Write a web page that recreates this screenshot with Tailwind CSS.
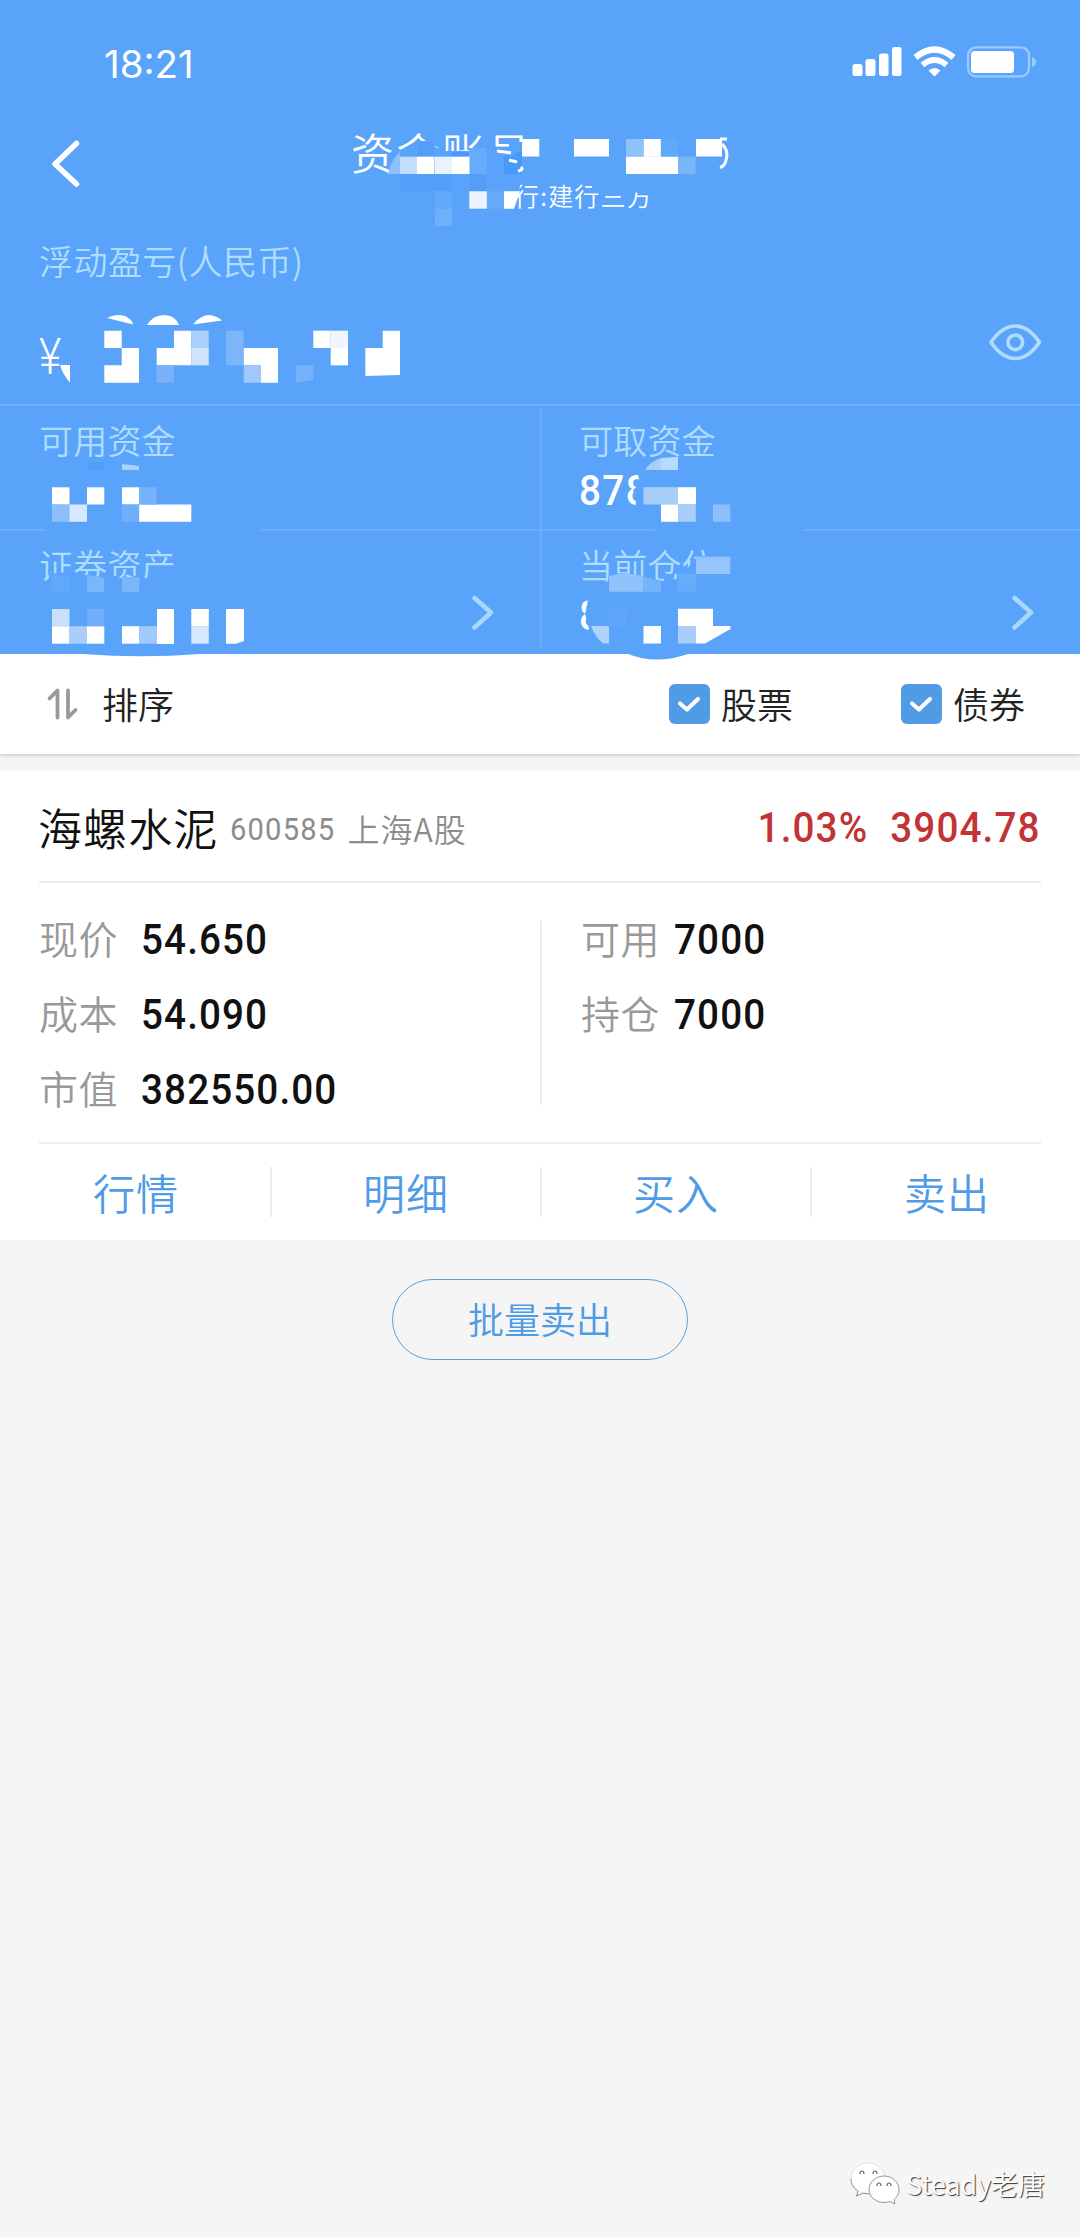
<!DOCTYPE html>
<html lang="zh-CN">
<head>
<meta charset="utf-8">
<title>资金账号</title>
<script src="https://cdn.jsdelivr.net/npm/@tailwindcss/browser@4"></script>
</head>
<body class="w-[1080px] min-h-[2237px] bg-[#f5f5f5] font-['Noto_Sans_CJK_SC',sans-serif] font-[350] leading-none antialiased">
<div class="flex flex-col min-h-[2237px]">

  <header class="relative h-[654px] bg-[#59a4fa] text-white flex flex-col">
    <!-- status bar -->
    <div class="h-[124px] pl-[104px] pr-[24px] flex justify-between">
      <div class="pt-[44px] text-[38.500px] leading-[40px] tracking-[0px] font-['Inter',sans-serif] font-normal">18:21</div>
      <svg class="mt-[40px]" width="204" height="44" viewBox="852 40 204 44" fill="#fff">
        <rect x="852.500" y="64" width="10" height="12" rx="2.500"/><rect x="865.500" y="59" width="10" height="17" rx="2.500"/><rect x="879" y="53.500" width="9.500" height="22.500" rx="2.500"/><rect x="892" y="47" width="9.500" height="29" rx="2.500"/>
        <path d="M915.500 57.500Q934.500 41.500 953.500 57.500" fill="none" stroke="#fff" stroke-width="6.500"/>
        <path d="M922.500 65Q934.500 55 946.500 65" fill="none" stroke="#fff" stroke-width="6"/>
        <path d="M928.500 70.500Q934.500 65.500 940.500 70.500L934.500 76.500Z"/>
        <rect x="968" y="47.300" width="61" height="29" rx="8" fill="none" stroke="#96cbff" stroke-width="2.300"/>
        <rect x="971" y="51" width="43" height="22" rx="3.500"/>
        <path d="M1032 57Q1036 58.500 1036 62Q1036 65.500 1032 67Z" fill="#96cbff"/>
      </svg>
    </div>
    <!-- title -->
    <div class="h-[104px] flex">
      <svg class="mt-[14px] ml-[48px]" width="36" height="52" viewBox="48 138 36 52" fill="none" stroke="#fff" stroke-width="5.500" stroke-linecap="round" stroke-linejoin="round"><path d="M76.500 143.500L55 164L76.500 184"/></svg>
      <div class="ml-[267px] w-[400px]">
        <div class="pt-[5px] text-[43px] leading-[44px] tracking-[2.500px]">资金账号</div>
        <div class="pt-[9px] pl-[163px] text-[25px] leading-[26px] tracking-[1.200px] whitespace-nowrap">行:建行三方</div>
      </div>
    </div>
    <!-- floating profit -->
    <div class="h-[176px] flex justify-between px-[39px]">
      <div>
        <div class="pt-[15px] text-[34px] leading-[36px] tracking-[0.450px] text-[#b0dcff]">浮动盈亏(人民币)</div>
        <div class="pt-[53px] text-[50px] leading-[50px] font-['Roboto',sans-serif] font-light origin-left scale-x-[.86]">¥</div>
      </div>
      <svg class="mt-[92px]" width="54" height="44" viewBox="987 320 54 44" fill="none" stroke="#b0dcff" stroke-width="3.600" stroke-linejoin="round"><path d="M991 342.300Q1002 326 1015.300 326Q1028.500 326 1039.500 342.300Q1028.500 358.500 1015.300 358.500Q1002 358.500 991 342.300Z"/><circle cx="1015.300" cy="342.300" r="7.300"/></svg>
    </div>
    <!-- balances -->
    <div class="relative grid grid-cols-2 border-t-2 border-[#6caffb] text-[34px] tracking-[0.200px]">
      <div class="h-[123px] pl-[39px] pt-[16px] leading-[36px] text-[#b0dcff]">可用资金</div>
      <div class="h-[123px] pl-[39px] pt-[16px] leading-[36px]"><div class="text-[#b0dcff]">可取资金</div><div class="mt-[12px] text-[42px] leading-[42px] tracking-[1.500px] font-['Roboto',sans-serif] font-medium origin-left scale-x-[.92]">878</div></div>
      <div class="h-[125px] pl-[39px] pt-[16px] pr-[44px] leading-[36px] text-[#b0dcff] border-t-2 border-[#6caffb] flex justify-between"><span>证券资产</span>
        <svg class="mt-[46px]" width="24" height="40" viewBox="472 594 24 40" fill="none" stroke="#a9d8ff" stroke-width="4.500" stroke-linecap="round" stroke-linejoin="round"><path d="M474.500 599L491 613.500L474.500 628.500"/></svg></div>
      <div class="h-[125px] pl-[39px] pt-[16px] pr-[44px] leading-[36px] border-t-2 border-[#6caffb] flex justify-between"><div><div class="text-[#b0dcff]">当前仓位</div><div class="mt-[12px] text-[42px] leading-[42px] font-['Roboto',sans-serif] font-medium origin-left scale-x-[.92]">8</div></div>
        <svg class="mt-[46px]" width="24" height="40" viewBox="472 594 24 40" fill="none" stroke="#a9d8ff" stroke-width="4.500" stroke-linecap="round" stroke-linejoin="round"><path d="M474.500 599L491 613.500L474.500 628.500"/></svg></div>
      <div class="absolute left-[540px] top-[3px] h-[240px] w-[2px] bg-[#6caffb]"></div>
    </div>

    <!-- redaction mosaic over the private figures -->
    <svg class="absolute left-0 top-0 z-10" width="1080" height="664" viewBox="0 0 1080 664">
      <g fill="#59a4fa">
        <path d="M388 176L396 158L401 150Q412 142 422 141Q426 140 430 143L442 151H469L498 148L509 149L509 142H600V180H388Z"/>
        <rect x="490" y="182" width="22" height="30"/><path d="M512 182H521L514 212H512Z"/>
        <rect x="592" y="180" width="66" height="12.500"/>
        <path d="M61 365H75V384H58Z"/>
        <rect x="45" y="527" width="216" height="6"/><rect x="655" y="527" width="149" height="6"/>
        <path d="M42 453H58V460H42Z"/>
        <path d="M47 583L50 574Q70 570 90 576L122 578H178V590H47Z"/>
        <path d="M637 470H664V510H635L636 500L633 490L640 484Z"/>
        <path d="M609 575Q625 571 640 576L657 580L678 583V592H605Z"/>
        <path d="M664 582V572L679 582V592H664ZM684 574L692 562L698 556H730V592H684Z"/>
        <path d="M588 596H612V636H590L588 624L585 614L587 606Z"/>
        <path d="M83 650H200V654Q142 658.500 83 654Z"/><path d="M628 650H688V654Q656 665 628 654Z"/>
      </g>
      <!-- title -->
      <g fill="#489af8"><path d="M504 156H512L522 150V174H504Z"/><rect x="452" y="152" width="17" height="4.500"/></g>
      <rect x="417" y="142" width="17" height="14" fill="#539ff8"/>
      <rect x="400" y="174" width="52" height="17" fill="#539ff8"/><rect x="469" y="174" width="17" height="17" fill="#539ff8"/>
      <path d="M388 174Q392 158 400 152V174Z" fill="#8cc1fb"/>
      <rect x="400" y="156.700" width="17.300" height="17.300" fill="#c2defb"/><rect x="435" y="156.700" width="17.300" height="17.300" fill="#e8f3fd"/><rect x="469" y="148" width="17.500" height="26" fill="#66acfa"/>
      <g fill="#fff">
        <rect x="417" y="156.700" width="17.500" height="17.300"/><rect x="452" y="156.700" width="17.500" height="17.300"/>
        <rect x="522" y="139" width="17.300" height="17.500"/><rect x="574" y="139" width="35" height="17.500"/><rect x="643.500" y="139" width="17.300" height="17.700"/><rect x="626" y="156.500" width="52" height="17.500"/><rect x="696" y="139" width="26" height="17.500"/>
        <path d="M504 191.300H520L514 208.700H504Z"/>
      </g>
      <g fill="none" stroke="#fff" stroke-width="3"><path d="M720 139H727M722 144Q729 151 726 160Q725 166 720 167.500M497 151L511 153M509 160L517 162M518 171Q524 170 521 167" /></g>
      <rect x="626" y="139" width="17.500" height="17.500" fill="#8fc1fb"/><rect x="661" y="139" width="17.300" height="17.500" fill="#60a8fa"/><rect x="678" y="156.500" width="17.500" height="17.500" fill="#7ab5fa"/>
      <rect x="469.300" y="191.300" width="17.500" height="17.400" fill="#e9f4fe"/><rect x="487" y="191.300" width="17" height="17.400" fill="#65abfa"/><rect x="435" y="191.300" width="17.300" height="17.400" fill="#61a9fa"/><rect x="435" y="208.700" width="17.300" height="17.300" fill="#6db1fb"/>
      <!-- profit -->
      <g fill="#fff">
        <path d="M107 318Q116 313 125 316Q132 319 133 324.500Z"/><path d="M147 325Q153 315 164 315Q175 315 179 325Z"/><path d="M193 324.500Q200 315 210 315Q217 316 222 320.500Z"/>
        <path d="M60 365H70V382.500Q63 375 60 365Z"/>
        <path d="M104.300 330.700H121.700V348H139V382.700H104.300V365.300H121.700V348H104.300Z"/>
        <path d="M174 330.700H191.300V365.300H156.700V348H174Z"/><path d="M243.700 348H278V382.700H261V365.300H243.700Z"/><path d="M313.300 330.700H330.700V348H313.300Z"/><rect x="330.700" y="348" width="17.300" height="17.300"/>
        <path d="M382.700 330.700H400V375L365.300 376V348H382.700Z"/>
      </g>
      <g><rect x="191.300" y="330.700" width="17.400" height="17.300" fill="#abcffb"/><rect x="191.300" y="348" width="17.400" height="17.300" fill="#d0e4fc"/><rect x="156.700" y="365.300" width="17.300" height="17.400" fill="#7ab2f9"/><rect x="226" y="330.700" width="17.500" height="34.600" fill="#7db5fa"/><rect x="243.700" y="365.300" width="17.300" height="17.400" fill="#a0c9fb"/><path d="M296 365.300H313.300V380L296 382.700Z" fill="#78b2fa"/><rect x="330.700" y="330.700" width="17.300" height="17.300" fill="#f1f5fc"/></g>
      <!-- available funds -->
      <path d="M122 464L139 466V470H122Z" fill="#aad3fb"/><rect x="87" y="462" width="17" height="8" fill="#529ff9"/>
      <g fill="#fff"><rect x="52" y="487.300" width="17.500" height="17.200"/><rect x="87" y="487.300" width="17.300" height="17.200"/><rect x="122" y="487.300" width="17.300" height="17.200"/><rect x="139" y="504.500" width="52.300" height="17.300"/></g>
      <rect x="139.300" y="487.300" width="17.300" height="17.200" fill="#74b2f9"/><rect x="52" y="504.500" width="17.500" height="17.300" fill="#8cbff9"/><rect x="69.500" y="504.500" width="17.500" height="17.300" fill="#d8e9fd"/><rect x="122" y="504.500" width="17.200" height="17.300" fill="#70aef9"/>
      <!-- securities -->
      <rect x="52" y="575" width="17.500" height="17" fill="#5fa8fa"/><path d="M87 575L104 578V592H87Z" fill="#7ab7fa"/><rect x="122" y="577" width="17.300" height="15" fill="#7ab7fa"/>
      <g fill="#fff"><rect x="157" y="609" width="17" height="35"/><rect x="191.300" y="609" width="17.500" height="17.300"/><path d="M226 609H244V641L236 643.700H226Z"/><rect x="52" y="626.200" width="17.500" height="17.500"/><rect x="87" y="626.200" width="17.300" height="17.500"/><rect x="122" y="626.200" width="17.300" height="17.500"/></g>
      <rect x="52" y="609" width="17.500" height="17.200" fill="#cbdffb"/><rect x="87" y="609" width="17.300" height="17.200" fill="#70aefa"/><rect x="69.500" y="626.200" width="17.500" height="17.500" fill="#aacdfa"/><rect x="139.300" y="626.200" width="17.700" height="17.500" fill="#a2c9fb"/><rect x="191.300" y="626.200" width="17.500" height="17.500" fill="#d7e8fc"/>
      <!-- withdrawable -->
      <path d="M645 470Q651 461 661 458V470Z" fill="#a5d0fb"/><path d="M661 458L678 456.700V470H661Z" fill="#b8dafb"/>
      <rect x="643.500" y="487.200" width="34.700" height="17.300" fill="#a8cffa"/><rect x="678" y="487.200" width="18" height="17.300" fill="#fff"/><rect x="661" y="504.500" width="17.300" height="17.300" fill="#fff"/><rect x="678.300" y="504.500" width="17.500" height="17.300" fill="#aacdf9"/><rect x="713" y="504.500" width="17.300" height="17.300" fill="#8dc0fb"/>
      <!-- position -->
      <rect x="696" y="556.700" width="34.300" height="17.300" fill="#94c5fb"/><path d="M609 576Q625 571 643 576V591.700H609Z" fill="#90c1fb"/><path d="M643 576L661 582V591.700H643Z" fill="#76b4fa"/><rect x="678" y="574" width="18" height="17.700" fill="#66acfa"/>
      <path d="M591 626H609V643.500H603Q595 637 591 626Z" fill="#b1d2fa"/><rect x="609" y="609" width="17.300" height="17" fill="#60a6fa"/>
      <g fill="#fff"><rect x="643.500" y="626" width="17.500" height="17.500"/><path d="M678 608.700H713V626H730.500V629L705 643.500H696V626H678Z"/></g><rect x="678" y="626" width="18" height="17.500" fill="#aacdf9"/>
    </svg>
  </header>

  <!-- sort and filter -->
  <section class="h-[100px] bg-white shadow-[0_1px_4px_rgba(0,0,0,0.22)] flex items-center pl-[46px] pr-[55px] text-[36px] text-[#222]">
    <svg class="-mt-[1px]" width="33" height="36" viewBox="46 686 33 36" fill="none" stroke="#999" stroke-width="3.800" stroke-linecap="round" stroke-linejoin="round"><path d="M49.500 698.500L57.500 690.500V717.500M68 690.500V717.500L75.500 710"/></svg>
    <span class="ml-[23px] -mt-[2px]">排序</span>
    <div class="ml-auto flex items-center gap-[11px]">
      <div class="w-[41px] h-[40px] rounded-[6px] bg-[#4f9be5] flex items-center justify-center"><svg width="24" height="18" viewBox="0 0 24 18" fill="none" stroke="#fff" stroke-width="4.200" stroke-linecap="round" stroke-linejoin="round"><path d="M3 8.500L10 14.500L21 4"/></svg></div><span class="-mt-[2px]">股票</span></div>
    <div class="ml-[108px] flex items-center gap-[11px]">
      <div class="w-[41px] h-[40px] rounded-[6px] bg-[#4f9be5] flex items-center justify-center"><svg width="24" height="18" viewBox="0 0 24 18" fill="none" stroke="#fff" stroke-width="4.200" stroke-linecap="round" stroke-linejoin="round"><path d="M3 8.500L10 14.500L21 4"/></svg></div><span class="-mt-[2px]">债券</span></div>
  </section>

  <!-- holding -->
  <section class="mt-[17px] h-[469px] bg-white px-[39px] flex flex-col">
    <div class="h-[112px] pt-[4px] border-b-2 border-[#ececec] flex items-center">
      <span class="-ml-[1px] -mt-[2px] text-[44px] tracking-[1.100px] text-[#111]">海螺水泥</span>
      <span class="ml-[12px] mt-[2px] w-[117px] text-[32px] tracking-[1.300px] text-[#8c8c8c] font-['Roboto',sans-serif] font-normal origin-left scale-x-[.91]">600585</span>
      <span class="text-[32px] tracking-[1px] text-[#8c8c8c]">上海A股</span>
      <div class="ml-auto text-[42px] tracking-[1.200px] text-[#c23335] font-['Roboto',sans-serif] font-medium origin-right scale-x-[.92] whitespace-nowrap flex gap-[24px]"><span>1.03%</span><span>3904.78</span></div>
    </div>
    <div class="h-[261px] border-b-2 border-[#ececec] flex pt-[38px]">
      <div class="w-[503px] h-[184px] border-r-2 border-[#ececec] flex flex-col gap-[37px] text-[39px] tracking-[0.400px]">
        <div class="flex items-center h-[38px] text-[#999]"><span class="w-[102px] -mt-[6px]">现价</span><span class="text-[42px] tracking-[1.200px] text-[#111] font-['Roboto',sans-serif] font-medium origin-left scale-x-[.92]">54.650</span></div>
        <div class="flex items-center h-[38px] text-[#999]"><span class="w-[102px] -mt-[6px]">成本</span><span class="text-[42px] tracking-[1.200px] text-[#111] font-['Roboto',sans-serif] font-medium origin-left scale-x-[.92]">54.090</span></div>
        <div class="flex items-center h-[38px] text-[#999]"><span class="w-[102px] -mt-[6px]">市值</span><span class="text-[42px] tracking-[1.200px] text-[#111] font-['Roboto',sans-serif] font-medium origin-left scale-x-[.92]">382550.00</span></div>
      </div>
      <div class="pl-[39px] flex flex-col gap-[37px] text-[39px] tracking-[0.400px]">
        <div class="flex items-center h-[38px] text-[#999]"><span class="w-[93px] -mt-[6px]">可用</span><span class="text-[42px] tracking-[1.200px] text-[#111] font-['Roboto',sans-serif] font-medium origin-left scale-x-[.92]">7000</span></div>
        <div class="flex items-center h-[38px] text-[#999]"><span class="w-[93px] -mt-[6px]">持仓</span><span class="text-[42px] tracking-[1.200px] text-[#111] font-['Roboto',sans-serif] font-medium origin-left scale-x-[.92]">7000</span></div>
      </div>
    </div>
    <div class="-ml-[37px] -mr-[41px] pt-[23px] grid grid-cols-4 text-center text-[42px] leading-[50px] tracking-[1px] text-[#4f9be5]">
      <div class="h-[50px] border-r-2 border-[#ececec]">行情</div><div class="h-[50px] border-r-2 border-[#ececec]">明细</div><div class="h-[50px] border-r-2 border-[#ececec]">买入</div><div class="h-[50px]">卖出</div>
    </div>
  </section>

  <button class="mt-[39px] self-center w-[296px] h-[81px] rounded-full border-[1.500px] border-[#5c9fdc] pb-[3px] text-[36px] font-[350] text-[#4f9be5] flex items-center justify-center">批量卖出</button>

  <footer class="mt-auto mb-[32px] mr-[35px] self-end flex items-center gap-[6px]">
    <svg width="50" height="43" viewBox="848 2163 50 43" fill="#fff" stroke="#8a8a8a" stroke-width="0.900"><path d="M866 2164C856 2164 849 2171 849 2180C849 2185 851.500 2189 856 2192L854.500 2197L861 2194C864 2195 868 2195.500 871 2194.500C884 2192 884 2180 883 2177C881 2169 874 2164 866 2164Z" stroke="#dcdcdc"/><path d="M849 2180C849 2185 851.500 2189 856 2192L854.500 2197L861 2194L867 2195" fill="none"/><path d="M882 2177C874 2177 867 2183 867 2190.500C867 2198 874 2203.500 882 2203.500C884 2203.500 886 2203 888 2202.500L893 2205L892 2200.500C895 2198 897 2194.500 897 2190.500C897 2183 890 2177 882 2177Z"/><path d="M858 2175Q858 2172 860 2172Q862 2172 862 2175M871 2175Q871 2172 873 2172Q875 2172 875 2175M875 2187Q875 2184 877 2184Q879 2184 879 2187M885 2187Q885 2184 887 2184Q889 2184 889 2187" fill="none" stroke="#666" stroke-width="1.200"/></svg>
    <span class="text-[27px] leading-[40px] text-white [text-shadow:1px_1px_1px_#333]">Steady老唐</span>
  </footer>
</div>
</body>
</html>
